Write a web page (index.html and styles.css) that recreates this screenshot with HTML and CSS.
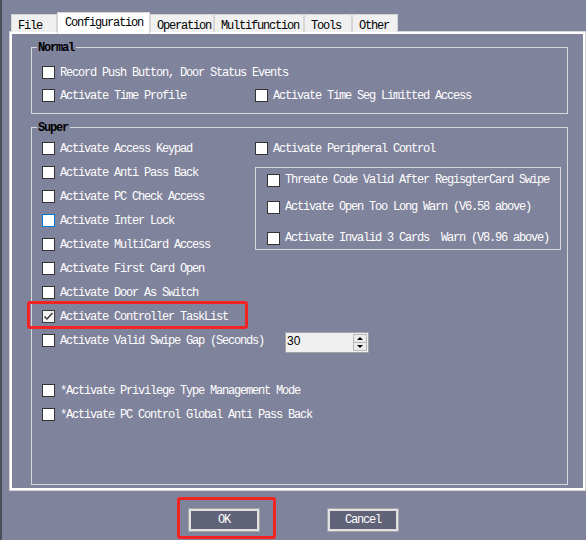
FILE: index.html
```html
<!DOCTYPE html>
<html>
<head>
<meta charset="utf-8">
<title>Configuration</title>
<link rel="stylesheet" href="styles.css">
</head>
<body>
<div class="window">
  <div class="tabs">
    <div class="tab w-file">File</div>
    <div class="tab active w-config">Configuration</div>
    <div class="tab w-oper">Operation</div>
    <div class="tab w-multi">Multifunction</div>
    <div class="tab w-tools">Tools</div>
    <div class="tab w-other">Other</div>
  </div>

  <div class="panel">
    <div class="group normal">
      <span class="legend">Normal</span>
      <div class="row r23"><span class="cb"></span><span class="lbl">Record Push Button, Door Status Events</span></div>
      <div class="row r23 two">
        <div class="item"><span class="cb"></span><span class="lbl">Activate Time Profile</span></div>
        <div class="item"><span class="cb"></span><span class="lbl">Activate Time Seg Limitted Access</span></div>
      </div>
    </div>

    <div class="group super">
      <span class="legend">Super</span>
      <div class="top">
        <div class="col-left">
          <div class="row"><span class="cb"></span><span class="lbl">Activate Access Keypad</span></div>
          <div class="row"><span class="cb"></span><span class="lbl">Activate Anti Pass Back</span></div>
          <div class="row"><span class="cb"></span><span class="lbl">Activate PC Check Access</span></div>
          <div class="row"><span class="cb focus"></span><span class="lbl">Activate Inter Lock</span></div>
          <div class="row"><span class="cb"></span><span class="lbl">Activate MultiCard Access</span></div>
        </div>
        <div class="col-right">
          <div class="row"><span class="cb"></span><span class="lbl">Activate Peripheral Control</span></div>
          <div class="inner">
            <div class="row r23"><span class="cb"></span><span class="lbl">Threate Code Valid After RegisgterCard Swipe</span></div>
            <div class="row r23 gap4"><span class="cb"></span><span class="lbl">Activate Open Too Long Warn (V6.58 above)</span></div>
            <div class="row r23 gap8"><span class="cb"></span><span class="lbl">Activate Invalid 3 Cards  Warn (V8.96 above)</span></div>
          </div>
        </div>
      </div>
      <div class="row"><span class="cb"></span><span class="lbl">Activate First Card Open</span></div>
      <div class="row"><span class="cb"></span><span class="lbl">Activate Door As Switch</span></div>
      <div class="row">
        <span class="cb checked"><svg width="11" height="11" viewBox="0 0 11 11"><polyline points="1.5,5.5 4,8 9.5,2" fill="none" stroke="#3a3a3a" stroke-width="1.5"/></svg></span>
        <span class="lbl">Activate Controller TaskList</span>
        <span class="mark mark-task"></span>
      </div>
      <div class="row">
        <span class="cb"></span><span class="lbl">Activate Valid Swipe Gap (Seconds)</span>
        <div class="spin">
          <span class="spin-val">30</span>
          <div class="arrows">
            <span class="arr up"></span>
            <span class="arr down"></span>
          </div>
        </div>
      </div>
      <div class="row spaced"><span class="cb"></span><span class="lbl">*Activate Privilege Type Management Mode</span></div>
      <div class="row"><span class="cb"></span><span class="lbl">*Activate PC Control Global Anti Pass Back</span></div>
    </div>
  </div>

  <div class="buttons">
    <div class="btn">OK<span class="mark mark-ok"></span></div>
    <div class="btn">Cancel</div>
  </div>
</div>
</body>
</html>
```

FILE: styles.css
```css
* { box-sizing: border-box; }

html, body {
  margin: 0;
  padding: 0;
}

body {
  background: #7f839b;
  font-family: "Liberation Mono", "DejaVu Sans Mono", monospace;
  font-size: 12px;
  letter-spacing: -1.2px;
  color: #ffffff;
  overflow: hidden;
}

.window {
  height: 540px;
  border-left: 2px solid #4e4e5a;
  overflow: hidden;
}

/* Tabs */
.tabs {
  display: flex;
  align-items: flex-end;
  height: 32px;
  padding-left: 9px;
}

.tab {
  height: 18px;
  background: #f0f0f0;
  border: 1px solid #d6d6d6;
  border-bottom: none;
  color: #000;
  padding: 3px 0 0 6px;
  line-height: 16px;
  white-space: pre;
  flex: none;
}

.tab.active {
  height: 22px;
  margin-bottom: -2px;
  background: #ffffff;
  padding: 1px 0 0 7px;
  line-height: 19px;
  position: relative;
  z-index: 1;
}

.w-file { width: 46px; }
.w-config { width: 93px; }
.w-oper { width: 64px; }
.w-multi { width: 90px; }
.w-tools { width: 48px; }
.w-other { width: 46px; }

/* Panel */
.panel {
  margin-left: 8px;
  width: 575px;
  height: 458px;
  border: 2px solid #ffffff;
  box-shadow: 0 0 0 1px #d4d4d8;
  padding: 13px 0 0 19px;
}

.group {
  position: relative;
  width: 537px;
  border: 1px solid #d8d8dc;
  padding-left: 10px;
}

.normal {
  padding-top: 13px;
  padding-bottom: 6px;
}

.super {
  margin-top: 13px;
  padding-top: 8px;
  padding-bottom: 58px;
}

.legend {
  position: absolute;
  left: 5px;
  top: -8px;
  line-height: 14px;
  padding: 1px 2px 0 1px;
  background: #7f839b;
  color: #000;
  font-weight: bold;
}

/* Rows */
.row {
  position: relative;
  display: flex;
  align-items: flex-start;
  height: 24px;
  line-height: 24px;
}

.r23 {
  height: 23px;
  line-height: 23px;
}

.two {
  display: grid;
  grid-template-columns: 213px 1fr;
}

.item {
  display: flex;
  align-items: flex-start;
}

.cb {
  flex: none;
  width: 13px;
  height: 13px;
  margin-top: 6px;
  margin-right: 5px;
  background: #ffffff;
  border: 1px solid #333333;
}

.normal .cb { margin-top: 5px; }
.inner .cb { margin-top: 6px; }

.cb.focus { border-color: #0078d7; }

.cb.checked {
  background: #f4f4f4;
  border-color: #3a3a3a;
}

.cb svg { display: block; }

.lbl {
  white-space: pre;
  padding-top: 1px;
}

.top {
  display: flex;
}

.col-left {
  width: 213px;
  flex: none;
}

.col-right {
  flex: none;
}

.inner {
  margin-top: 7px;
  width: 306px;
  border: 1px solid #d8d8dc;
  padding-left: 11px;
}

.gap4 { margin-top: 4px; }
.gap8 { margin-top: 8px; }

.spaced { margin-top: 26px; }

/* Spinner */
.spin {
  display: flex;
  margin-left: 21px;
  margin-top: 4px;
  width: 84px;
  height: 21px;
  background: #f0f0f0;
  border: 1px solid #a4a4a8;
  color: #000;
  font-family: "Liberation Sans", Arial, sans-serif;
  font-size: 12px;
  letter-spacing: 0;
}

.spin-val {
  padding-left: 1px;
  line-height: 17px;
}

.arrows {
  margin: 1px 1px 1px auto;
  width: 14px;
  display: flex;
  flex-direction: column;
}

.arr {
  position: relative;
  flex: 1;
  background: #ececec;
  border: 1px solid #b8b8bc;
}

.arr.down { border-top: none; }

.arr::after {
  content: "";
  position: absolute;
  left: 3px;
  width: 0;
  height: 0;
  border-left: 3px solid transparent;
  border-right: 3px solid transparent;
}

.arr.up::after {
  top: 2px;
  border-bottom: 3px solid #000;
}

.arr.down::after {
  top: 2px;
  border-top: 3px solid #000;
}

/* Red highlight marks */
.mark {
  position: absolute;
  border: 3px solid #f42424;
  border-radius: 3px;
  pointer-events: none;
}

.mark-task {
  left: -15px;
  top: -3px;
  width: 221px;
  height: 28px;
}

.mark-ok {
  left: -12px;
  top: -12px;
  width: 99px;
  height: 42px;
}

/* Buttons */
.buttons {
  display: flex;
  gap: 67px;
  margin-top: 18px;
  padding-left: 186px;
}

.btn {
  position: relative;
  width: 72px;
  height: 24px;
  background: #606378;
  border: 1px solid #a8a8ac;
  box-shadow: inset 0 0 0 2px #e2e2e4;
  color: #ffffff;
  text-align: center;
  line-height: 23px;
}
```
